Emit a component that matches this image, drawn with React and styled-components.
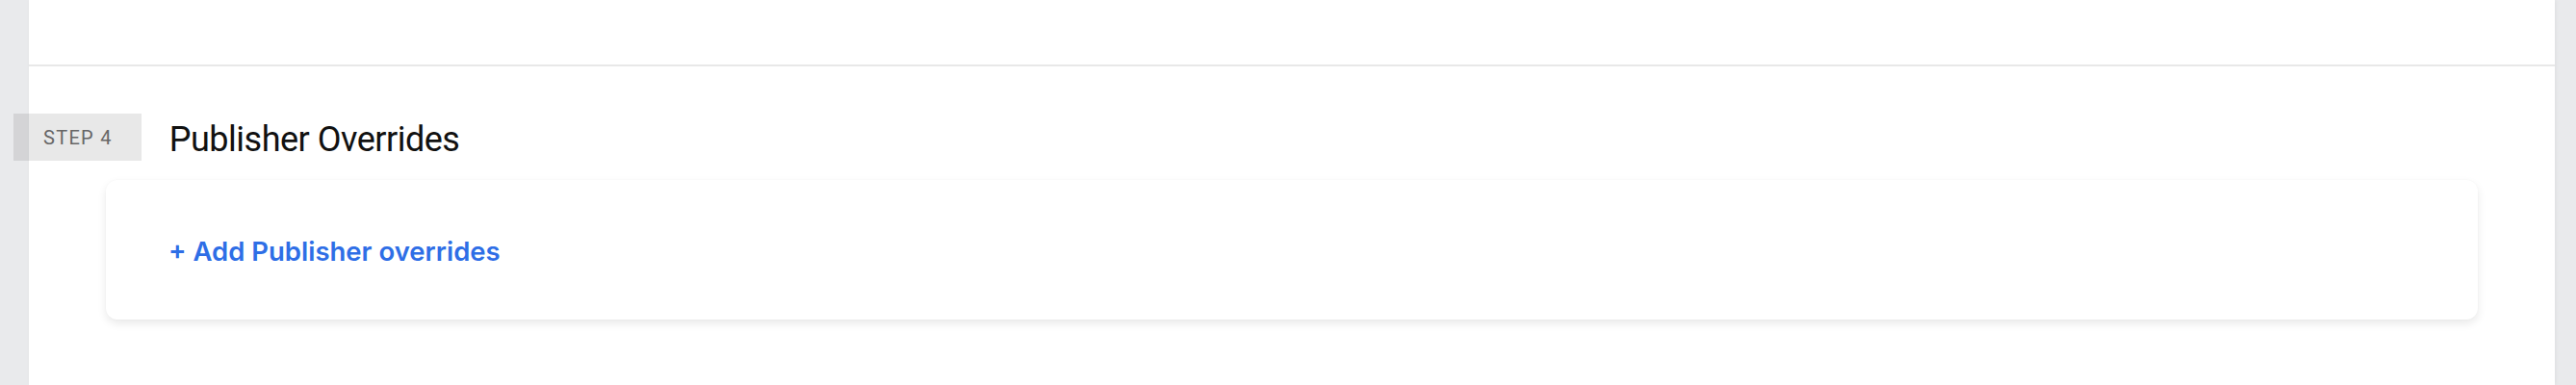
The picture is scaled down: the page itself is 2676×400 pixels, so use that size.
import styled, { createGlobalStyle } from 'styled-components'

const GlobalStyle = createGlobalStyle`
    html, body {
        margin: 0;
        padding: 0;
        background: #e9eaec;
        font-family: Roboto, "Noto Sans", "Liberation Sans", sans-serif;
    }
`

const Page = styled.div`
    display: flex;
    min-height: 400px;
    background: #e9eaec;
`

const Rail = styled.div`
    flex: 0 0 ${({ width }) => width}px;
    background: #e9eaec;
`

const Panel = styled.main`
    flex: 1;
    background: #ffffff;
    box-shadow: 1px 0 4px rgba(0, 0, 0, 0.05);
    position: relative;
    z-index: 1;
`

const TopSection = styled.section`
    height: 67px;
    border-bottom: 2px solid #e8e8e8;
`

const StepSection = styled.section`
    padding-top: 49px;
`

const StepHeader = styled.div`
    display: flex;
    align-items: center;
    gap: 29px;
`

const StepBadge = styled.span`
    margin-left: -16px;
    height: 49px;
    padding: 0 30px 0 31px;
    display: flex;
    align-items: center;
    background: rgba(0, 0, 0, 0.09);
    color: #666666;
    font-size: 20px;
    letter-spacing: 1.3px;
    text-transform: uppercase;
`

const StepTitle = styled.h2`
    margin: 4px 0 0;
    font-size: 36px;
    font-weight: 400;
    letter-spacing: -0.5px;
    color: #111111;
`

const Card = styled.div`
    margin: 20px 80px 0;
    height: 145px;
    padding: 0 65px;
    display: flex;
    align-items: center;
    background: #ffffff;
    border-radius: 12px;
    box-shadow: 0 4px 10px rgba(0, 0, 0, 0.09), 0 0 2px rgba(0, 0, 0, 0.03);
`

const AddLink = styled.button`
    border: none;
    background: none;
    padding: 0;
    margin-top: 2px;
    cursor: pointer;
    font-family: Inter, Roboto, sans-serif;
    font-size: 27.5px;
    font-weight: 600;
    color: #2e6ee6;
`

function App() {
    return (
        <>
            <GlobalStyle />
            <Page>
                <Rail width={30} />
                <Panel>
                    <TopSection />
                    <StepSection>
                        <StepHeader>
                            <StepBadge>Step 4</StepBadge>
                            <StepTitle>Publisher Overrides</StepTitle>
                        </StepHeader>
                        <Card>
                            <AddLink>+ Add Publisher overrides</AddLink>
                        </Card>
                    </StepSection>
                </Panel>
                <Rail width={22} />
            </Page>
        </>
    )
}

export default App
